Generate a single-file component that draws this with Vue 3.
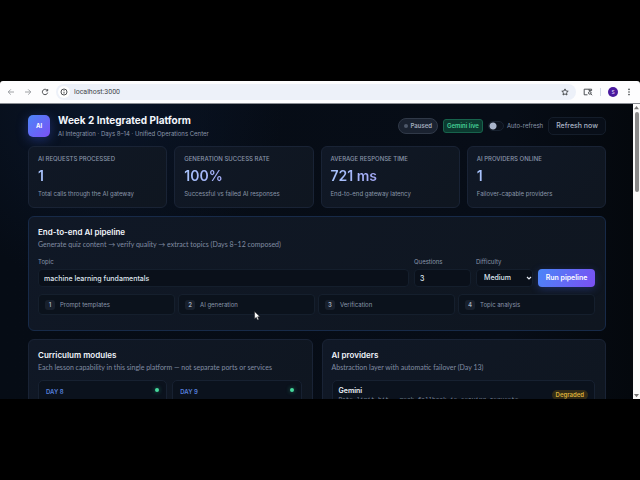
<script setup>
import { ref } from 'vue'

const address = ref('localhost:3000')
const autoRefresh = ref(false)
const topic = ref('machine learning fundamentals')
const questions = ref('3')
const difficulty = ref('Medium')

const stats = [
  { label: 'AI requests processed', value: '1', note: 'Total calls through the AI gateway' },
  { label: 'Generation success rate', value: '100%', note: 'Successful vs failed AI responses' },
  { label: 'Average response time', value: '721 ms', note: 'End-to-end gateway latency' },
  { label: 'AI providers online', value: '1', note: 'Failover-capable providers' }
]
const steps = ['Prompt templates', 'AI generation', 'Verification', 'Topic analysis']
const modules = ['Day 8', 'Day 9']
</script>

<template>
  <div class="stage">
    <div class="browser">
      <div class="toolbar">
        <nav class="history">
          <button class="tool dim" aria-label="Back">
            <svg viewBox="0 0 8 8"><path d="M7 4H1.2M3.8 1.4 1.2 4l2.6 2.6" /></svg>
          </button>
          <button class="tool dim" aria-label="Forward">
            <svg viewBox="0 0 8 8"><path d="M1 4h5.8M4.2 1.4 6.8 4 4.2 6.6" /></svg>
          </button>
          <button class="tool" aria-label="Reload">
            <svg viewBox="0 0 8 8"><path d="M6.4 2.6A2.7 2.7 0 1 0 6.7 4.6M6.7 1v1.9H4.8" /></svg>
          </button>
        </nav>
        <div class="omnibox">
          <span class="site-info">
            <svg viewBox="0 0 8 8"><circle cx="4" cy="4" r="3" /><path d="M4 3.7v1.9M4 2.2v.8" /></svg>
          </span>
          <input v-model="address" class="address" aria-label="Address" />
          <button class="tool" aria-label="Bookmark">
            <svg viewBox="0 0 8 8"><path d="m4 .9.95 2.05 2.25.28-1.66 1.54.43 2.23L4 5.9 2.03 7l.43-2.23L.8 3.23l2.25-.28z" /></svg>
          </button>
        </div>
        <button class="tool wide" aria-label="Search tabs">
          <svg viewBox="0 0 10 8"><path d="M4.500 6.800H1.200V1.200h7.400v1.400M6 1.200v1.400h2.600" /><circle cx="6.800" cy="4.900" r="1.300" /><path d="m7.800 5.900 1.300 1.300" /></svg>
        </button>
        <span class="divider"></span>
        <button class="avatar" aria-label="Profile">s</button>
        <button class="tool" aria-label="Menu">
          <svg viewBox="0 0 8 8" class="solid"><circle cx="4" cy="1.4" r=".8" /><circle cx="4" cy="4" r=".8" /><circle cx="4" cy="6.6" r=".8" /></svg>
        </button>
      </div>

      <div class="viewport">
        <main class="page">
          <header class="header">
            <div class="logo">AI</div>
            <div class="brand">
              <h1>Week 2 Integrated Platform</h1>
              <p>AI Integration · Days 8–14 · Unified Operations Center</p>
            </div>
            <div class="actions">
              <span class="status"><i></i>Paused</span>
              <span class="live">Gemini live</span>
              <label class="toggle">
                <input v-model="autoRefresh" type="checkbox" />
                <span>Auto-refresh</span>
              </label>
              <button class="refresh">Refresh now</button>
            </div>
          </header>

          <section class="stats">
            <article v-for="s in stats" :key="s.label" class="card stat">
              <h3>{{ s.label }}</h3>
              <strong>{{ s.value }}</strong>
              <p>{{ s.note }}</p>
            </article>
          </section>

          <section class="card pipeline">
            <h2>End-to-end AI pipeline</h2>
            <p class="lead">Generate quiz content → verify quality → extract topics (Days 8–12 composed)</p>
            <form class="form" @submit.prevent>
              <div class="field">
                <label for="topic">Topic</label>
                <input id="topic" v-model="topic" />
              </div>
              <div class="field">
                <label for="questions">Questions</label>
                <input id="questions" v-model="questions" inputmode="numeric" />
              </div>
              <div class="field">
                <label for="difficulty">Difficulty</label>
                <div class="select">
                  <select id="difficulty" v-model="difficulty">
                    <option>Easy</option>
                    <option>Medium</option>
                    <option>Hard</option>
                  </select>
                  <svg viewBox="0 0 6 4"><path d="m1 1 2 2 2-2" /></svg>
                </div>
              </div>
              <button class="run">Run pipeline</button>
            </form>
            <ol class="steps">
              <li v-for="(step, i) in steps" :key="step"><b>{{ i + 1 }}</b>{{ step }}</li>
            </ol>
          </section>

          <div class="columns">
            <section class="card panel">
              <h2>Curriculum modules</h2>
              <p class="lead">Each lesson capability in this single platform — not separate ports or services</p>
              <div class="modules">
                <div v-for="m in modules" :key="m" class="module"><span>{{ m }}</span><i></i></div>
              </div>
            </section>
            <section class="card panel">
              <h2>AI providers</h2>
              <p class="lead">Abstraction layer with automatic failover (Day 13)</p>
              <div class="provider">
                <div>
                  <h3>Gemini</h3>
                  <code>Rate limit hit — mock fallback is serving requests</code>
                </div>
                <span class="badge">Degraded</span>
              </div>
            </section>
          </div>
        </main>
        <div class="scrollbar">
          <svg viewBox="0 0 7 7"><path d="M3.500 2 6 5.200H1z" /></svg>
          <span class="thumb"></span>
          <svg viewBox="0 0 7 7"><path d="M1 2h5L3.500 5.200z" /></svg>
        </div>
      </div>
    </div>
    <svg class="cursor" viewBox="0 0 7 10"><path d="M.6.6v7.200l1.700-1.500 1.200 2.700 1.300-.6-1.200-2.600h2.300z" /></svg>
  </div>
</template>

<style>
body {
  background: #000;
}
</style>

<style scoped>
* {
  box-sizing: border-box;
}
h1, h2, h3, p, ol {
  margin: 0;
  padding: 0;
}
button, input, select {
  font: inherit;
  color: inherit;
  margin: 0;
  padding: 0;
  border: 0;
  background: none;
  min-width: 0;
  outline: none;
}
svg {
  display: block;
}
.stage {
  position: relative;
  display: flex;
  height: 100vh;
  padding: 81px 0;
  background: #000;
  color: #e6ebf5;
  font: 7px/10px "Inter", "Liberation Sans", sans-serif;
}
.browser {
  flex: 1;
  min-width: 0;
  display: flex;
  flex-direction: column;
  overflow: hidden;
}
.toolbar {
  flex: none;
  display: flex;
  align-items: center;
  gap: 7px;
  height: 23px;
  padding: 0 7px;
  background: #fdfdfe;
  border-bottom: 1px solid #8a8d93;
  border-radius: 3px 3px 0 0;
  color: #3c4043;
}
.history {
  display: flex;
  gap: 9px;
}
.tool {
  flex: none;
  width: 8px;
  height: 8px;
}
.tool svg, .site-info svg {
  width: 100%;
  height: 8px;
  fill: none;
  stroke: currentColor;
  stroke-width: 0.9;
}
.tool .solid {
  fill: currentColor;
  stroke: none;
}
.dim {
  color: #94979c;
}
.wide {
  width: 10px;
}
.omnibox {
  flex: 1;
  display: flex;
  align-items: center;
  gap: 4px;
  height: 16px;
  padding: 0 7px 0 2px;
  border-radius: 8px;
  background: #edf1f9;
}
.site-info {
  display: grid;
  place-items: center;
  width: 12px;
  height: 12px;
  border-radius: 50%;
  background: #fff;
}
.site-info svg {
  width: 8px;
}
.address {
  flex: 1;
  font-family: "Roboto", sans-serif;
  color: #44474c;
}
.divider {
  width: 1px;
  height: 8px;
  background: #d3dbe8;
}
.avatar {
  width: 10px;
  height: 10px;
  border-radius: 50%;
  background: #4a1a9e;
  color: #e8dcff;
  font-size: 6px;
  line-height: 8px;
}
.viewport {
  flex: 1;
  min-height: 0;
  display: flex;
}
.page {
  flex: 1;
  min-width: 0;
  overflow: hidden;
  padding: 8px 27px 0 28px;
  background:
    radial-gradient(circle at 16% 0, #0a1528 0, transparent 30%),
    linear-gradient(90deg, #060c15, #070d17 80%, #04080d);
}
.header {
  display: flex;
  align-items: center;
  gap: 8px;
  height: 28px;
}
.logo {
  display: grid;
  place-items: center;
  width: 22px;
  height: 22px;
  border-radius: 5px;
  background: linear-gradient(135deg, #4b86f7, #7c50f6);
  box-shadow: 0 3px 12px #3b5bdb66;
  color: #fff;
  font-size: 6px;
  font-weight: 700;
}
.brand {
  display: grid;
  gap: 2px;
}
.brand h1 {
  font-size: 10px;
  line-height: 14px;
  font-weight: 700;
  color: #f3f6fc;
}
.brand p {
  color: #8a96aa;
  font-size: 6px;
}
.actions {
  display: flex;
  align-items: center;
  gap: 5px;
  margin-left: auto;
  white-space: nowrap;
}
.status {
  display: flex;
  align-items: center;
  gap: 3px;
  height: 16px;
  padding: 0 5px;
  border: 1px solid #303948;
  border-radius: 8px;
  background: #1a2230;
  color: #a3adbd;
  font-size: 6px;
  font-weight: 600;
}
.status i {
  width: 4px;
  height: 4px;
  border-radius: 50%;
  background: #4d586a;
}
.live {
  height: 14px;
  padding: 1px 3px;
  border: 1px solid #17634c;
  border-radius: 3px;
  background: #0c3a30;
  color: #45cf98;
  font-size: 6px;
  font-weight: 600;
}
.toggle {
  display: flex;
  align-items: center;
  gap: 3px;
  color: #8a96aa;
  font-size: 6px;
}
.toggle input {
  appearance: none;
  width: 16px;
  height: 10px;
  border: 1px solid #182230;
  border-radius: 5px;
  background: radial-gradient(circle at 4px 4px, #a9b4cb 3px, transparent 4px) #0b111c;
}
.refresh {
  height: 18px;
  padding: 0 7px;
  border: 1px solid #141d2a;
  border-radius: 5px;
  background: #080e18;
  color: #aab4c5;
  font-weight: 500;
}
.card {
  min-width: 0;
  border: 1px solid #192335;
  border-radius: 6px;
  background: linear-gradient(135deg, #101826, #0f1620);
}
.stats {
  display: grid;
  grid-template-columns: repeat(4, 1fr);
  gap: 7px;
  margin-top: 6px;
}
.stat {
  height: 62px;
  padding: 7px 9px;
  white-space: nowrap;
}
.stat h3 {
  color: #8995a9;
  font-size: 6px;
  line-height: 10px;
  font-weight: 500;
  text-transform: uppercase;
}
.stat strong {
  display: block;
  margin: 4px 0 5px;
  background: linear-gradient(90deg, #a8c4fc, #a3a0f5 60px);
  background-clip: text;
  color: transparent;
  font-size: 14px;
  line-height: 16px;
  font-weight: 600;
}
.stat p {
  color: #8b97aa;
  font-size: 6px;
}
.pipeline {
  margin-top: 8px;
  padding: 9px 10px 15px 9px;
  border-color: #172a48;
}
h2 {
  color: #f0f4fb;
  font-size: 8px;
  line-height: 12px;
  font-weight: 600;
}
.lead {
  margin-top: 1px;
  color: #818da3;
  font: 7px/11px "Lato", sans-serif;
}
.form {
  display: grid;
  grid-template-columns: 1fr 57px 57px 57px;
  align-items: end;
  gap: 5px;
  margin-top: 7px;
}
.field {
  display: grid;
  gap: 3px;
}
.field label {
  color: #8a96ab;
  font-size: 6px;
  line-height: 9px;
}
.field input, .field select {
  width: 100%;
  height: 18px;
  padding: 0 5px;
  border: 1px solid #141e2c;
  border-radius: 4px;
  background: #0a101a;
  color: #dfe5ef;
  font-size: 7px;
  font-weight: 500;
}
.select {
  display: grid;
  align-items: center;
}
.select select, .select svg {
  grid-area: 1 / 1;
}
.select select {
  appearance: none;
  padding-left: 7px;
}
.select svg {
  justify-self: end;
  width: 6px;
  height: 4px;
  margin-right: 1px;
  fill: none;
  stroke: #e4e9f2;
  stroke-width: 1.2;
  pointer-events: none;
}
.run {
  height: 18px;
  border-radius: 4px;
  background: linear-gradient(120deg, #4a86f8, #7b4ff3);
  box-shadow: 0 2px 8px #3b5bdb55;
  color: #fff;
  font-weight: 600;
  white-space: nowrap;
}
.steps {
  display: grid;
  grid-template-columns: repeat(4, 1fr);
  gap: 3px;
  margin-top: 7px;
  list-style: none;
}
.steps li {
  display: flex;
  align-items: center;
  gap: 5px;
  height: 21px;
  padding: 0 6px;
  border: 1px solid #151f2d;
  border-radius: 4px;
  background: #0b121c;
  color: #8a96aa;
  font-size: 6px;
}
.steps b {
  width: 10px;
  height: 10px;
  border-radius: 3px;
  background: #18202d;
  color: #a2adbd;
  font-weight: 600;
  text-align: center;
}
.columns {
  display: grid;
  grid-template-columns: 1fr 1fr;
  gap: 9px;
  margin-top: 8px;
}
.panel {
  height: 90px;
  padding: 9px 10px 9px 9px;
}
.panel .lead {
  margin-top: 1px;
  white-space: nowrap;
}
.modules {
  display: grid;
  grid-template-columns: 1fr 1fr;
  gap: 5px;
  margin-top: 7px;
}
.module, .provider {
  display: flex;
  justify-content: space-between;
  height: 60px;
  padding: 6px 7px;
  border: 1px solid #172131;
  border-radius: 5px;
  background: #0b121d;
}
.module span {
  color: #5680dc;
  font-size: 6px;
  font-weight: 600;
  text-transform: uppercase;
}
.module i {
  width: 4px;
  height: 4px;
  margin-top: 1px;
  border-radius: 50%;
  background: #46d89c;
  box-shadow: 0 0 4px #34d39988;
}
.provider {
  margin-top: 7px;
  padding: 5px 6px;
}
.provider h3 {
  color: #eef2f9;
  font-size: 7px;
  line-height: 10px;
  font-weight: 600;
}
.provider code {
  display: block;
  color: #7b879b;
  font: 6px/8px "Liberation Mono", monospace;
}
.badge {
  height: 10px;
  margin-top: 4px;
  padding: 0 4px;
  border-radius: 5px;
  background: #322b16;
  color: #dcb13a;
  font-size: 6px;
  font-weight: 600;
}
.scrollbar {
  flex: none;
  display: flex;
  flex-direction: column;
  align-items: center;
  width: 7px;
  background: #fbfbfb;
}
.scrollbar svg {
  width: 7px;
  height: 7px;
  fill: #777;
}
.scrollbar svg:last-child {
  margin-top: auto;
}
.thumb {
  width: 4px;
  height: 80px;
  margin-top: 1px;
  border-radius: 2px;
  background: #8b8b8b;
}
.cursor {
  position: absolute;
  left: 254px;
  top: 311px;
  width: 7px;
  height: 10px;
  fill: #fff;
  stroke: #222;
  stroke-width: 0.5;
}
</style>
